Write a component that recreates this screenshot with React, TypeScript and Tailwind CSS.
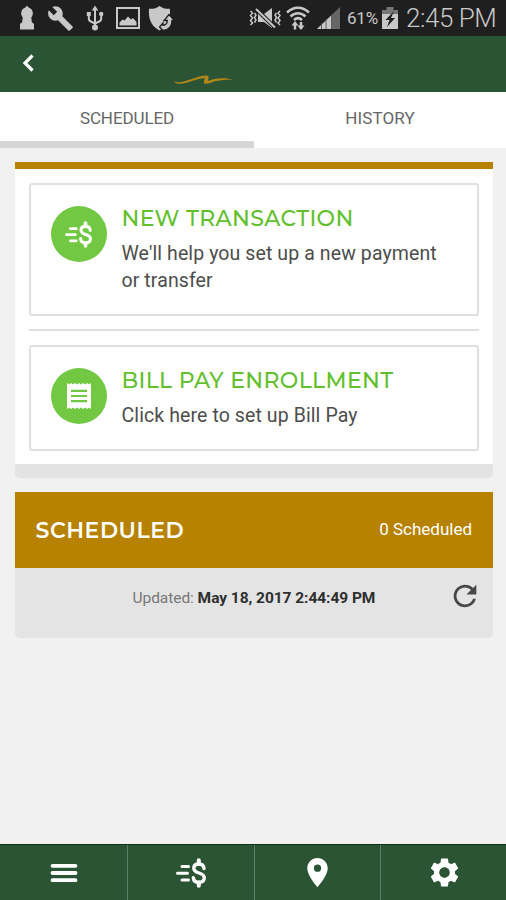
import type { ReactNode } from "react";
import { MdBuild, MdLocationOn, MdRefresh, MdSettings } from "react-icons/md";

function TransferIcon({ className }: { className?: string }) {
  return (
    <svg viewBox="0 0 32 30" className={className} fill="none" stroke="currentColor" strokeWidth="3.4" strokeLinecap="round">
      <path d="M7 8.500H13.500M2.500 15.200H12.500M7 22H13.500" strokeWidth="3" />
      <path d="M23.800 2.300v3.500M23.800 24.500V27.700" strokeWidth="4" />
      <path d="M29 10.500C28.800 7.200 26.800 6 23.800 6c-3 0-5 1.600-5 4.200 0 6 10.500 3.600 10.500 9.600 0 2.900-2.200 4.500-5.500 4.500s-5.300-1.600-5.500-4.700" />
    </svg>
  );
}

function ReceiptIcon() {
  return (
    <svg viewBox="0 0 26 28" className="h-7 w-[26px]">
      <path
        fill="#fff"
        d="M1 1l2 1.500L5 1l2 1.500L9 1l2 1.500L13 1l2 1.500L17 1l2 1.500L21 1l2 1.500L25 1v26l-2-1.500-2 1.500-2-1.500-2 1.500-2-1.500-2 1.500-2-1.500L9 27l-2-1.500L5 27l-2-1.500L1 27z"
      />
      <path d="M5 8.800h16M5 14h16M5 19.200h16" stroke="#72c842" strokeWidth="2.200" />
    </svg>
  );
}

function StatusBar() {
  return (
    <div className="flex h-9 items-center bg-[#1f1f1f] text-[#c8c8c8]">
      <svg viewBox="0 0 16 26" className="ml-[19px] h-[26px] w-4" fill="currentColor">
        <path d="M8 .8l1.700 1.600a6.200 6.200 0 0 1 2.600 9.900L12.800 17l2.200 2v5.500H1V19l2.200-2 .5-4.700A6.200 6.200 0 0 1 6.300 2.400z" />
      </svg>
      <MdBuild className="ml-3 size-[27px]" />
      <svg viewBox="0 0 18 26" className="ml-3 h-[26px] w-[18px]" fill="none" stroke="currentColor" strokeWidth="2">
        <path d="M9 4v18M2.800 9v4.500c0 2 1.500 3 3 3.500L9 18.500M15.200 9v4.500c0 2-1.500 3-3 3.500L9 18.500" />
        <path d="M9 .5l3.300 5H5.700zM.8 7h4v4h-4z" fill="currentColor" stroke="none" />
        <circle cx="15.200" cy="9" r="2.200" fill="currentColor" stroke="none" />
        <circle cx="9" cy="22.500" r="3" fill="currentColor" stroke="none" />
      </svg>
      <svg viewBox="0 0 24 22" className="ml-3 h-[22px] w-6">
        <path d="M1 1h22v20H1z" fill="none" stroke="currentColor" strokeWidth="2" />
        <path d="M3.500 18.500v-3l3-3 2 1 3.500-4 3 3 2-1.500 3.500 4v3.500z" fill="currentColor" />
      </svg>
      <svg viewBox="0 0 27 27" className="ml-2 size-[27px]">
        <path d="M11.500 1c3 2.400 6 3 10.300 2.800 1 9.200-.5 16.700-10.300 21.700C2.500 21 .3 13 1 3.800 5.500 4 8.500 3.400 11.500 1z" fill="currentColor" />
        <path
          d="M21 9.500l5.500 6H24c0 5.500-3 9.500-9 10l-3.500-3.500 3.500-4v2.300c3-.3 4.300-2 4.300-4.800h-3.300z"
          fill="currentColor"
          stroke="#1f1f1f"
          strokeWidth="1.300"
        />
      </svg>

      <svg viewBox="0 0 33 24" className="ml-auto h-6 w-[33px]" fill="none" stroke="currentColor" strokeWidth="1.500">
        <path d="M1.500 5l2 2-2 2.500 2 2.500-2 2.500 2 2.500-2 2M5.500 7L7 9l-1.500 2.500L7 14l-1.500 2.500M31 5l-2 2 2 2.500-2 2.500 2 2.500-2 2.500 2 2M27.500 7L26 9l1.500 2.500L26 14l1.500 2.500" />
        <path d="M9 8h6l8-6v20l-8-6H9z" fill="currentColor" stroke="none" />
        <path d="M7 3l19 18.500" stroke="#1f1f1f" strokeWidth="4" />
        <path d="M7 3l19 18.500" strokeWidth="2" />
      </svg>
      <svg viewBox="0 0 26 26" className="ml-[3px] size-[26px]" fill="none" stroke="currentColor" strokeWidth="2.500">
        <path d="M2 7.500c6.500-6.500 15.500-6.500 22 0M5.500 11.500c4.500-4.500 10.500-4.500 15 0M9 15c2.500-2.500 5.500-2.500 8 0" />
        <path d="M10 24.500V18M16 17v7" strokeWidth="2.500" />
        <path d="M6.500 20.500L10 16l3.500 4.500zM12.500 20.500L16 25l3.500-4.500z" fill="currentColor" stroke="none" />
      </svg>
      <svg viewBox="0 0 24 24" className="ml-[5px] size-6">
        <path d="M24 1v22H1z" fill="#666" />
        <path d="M16 8.700V23H1z" fill="currentColor" />
        <path d="M5.500 17v6M10 13v10M15.500 8v15" stroke="#444" strokeWidth=".8" />
      </svg>
      <span className="ml-[7px] w-8 font-[Roboto] text-[17px] leading-none tracking-[-0.200px]">61%</span>
      <svg viewBox="0 0 18 24" className="ml-[2px] h-6 w-[18px]">
        <path d="M5.500 1h7v3H17v19H1V4h4.500z" fill="#777" />
        <path d="M1 8h16v15H1z" fill="currentColor" />
        <path d="M13 5L4.500 14h4L6 21l8-9h-4z" fill="#1f1f1f" />
      </svg>
      <span className="mr-[9px] ml-[7px] w-[91px] font-[Roboto] text-[26px] leading-none font-light whitespace-nowrap tracking-[-0.450px]">
        2:45 PM
      </span>
    </div>
  );
}

function ActionCard({ icon, title, text, className }: { icon: ReactNode; title: string; text: string; className: string }) {
  return (
    <button className={`flex w-full items-start rounded-[3px] border-2 border-[#e0e0e0] pl-5 text-left ${className}`}>
      <span className="mt-[21px] flex size-14 shrink-0 items-center justify-center rounded-full bg-[#72c842] text-white">{icon}</span>
      <span className="mt-5 ml-[15px]">
        <span className="block font-[Montserrat,Lato] text-[22px] leading-[28px] font-medium tracking-[0.350px] whitespace-nowrap text-[#62c02d]">
          {title}
        </span>
        <span className="mt-2 block w-[330px] text-[19.500px] leading-[26.500px] tracking-[0.100px] text-[#4d4d4d]">{text}</span>
      </span>
    </button>
  );
}

export default function App() {
  return (
    <div className="flex h-[900px] w-[506px] flex-col overflow-hidden bg-[#f1f1f1] font-[Roboto,sans-serif]">
      <StatusBar />

      <header className="flex h-14 bg-[#2a5434]">
        <svg viewBox="0 0 12 18" className="mt-[18px] ml-[22px] h-[18px] w-3" fill="none" stroke="#fff" strokeWidth="3.200">
          <path d="M10.500 1.500L3 9l7.500 7.500" />
        </svg>
        <svg viewBox="0 0 62 12" className="mt-[38px] ml-[139px] h-3 w-[62px]" fill="#b28716">
          <path d="M1 7.500c4 1.500 8 .6 14-1.300S27 2 32.500 1.600c3-.1 3.700 1.200 3 2.800l-.7 2.500C41 4.500 47 4 53 4.300l7 1.500c-7-.3-13 .2-18 1.500-4 1.200-7 2.700-9.500 2.400-1.700-.2-1.900-1.300-1.500-2.700l.8-2.700C27 4.200 21 6.500 16 8 9 10.200 3 10.700 1 7.500z" />
        </svg>
      </header>

      <nav className="flex h-14 bg-white text-[17px] text-[#666]">
        <button className="w-[254px] border-b-[7px] border-[#d6d6d6] pt-[4px] tracking-[-0.100px]">SCHEDULED</button>
        <button className="flex-1 border-b-[7px] border-white pt-[4px] tracking-[0.100px]">HISTORY</button>
      </nav>

      <main className="flex-1 pt-[14px] pr-[13px] pl-[14.500px]">
        <section className="overflow-hidden rounded-b-[5px] border-t-[7px] border-b-[14px] border-t-[#b68200] border-b-[#e3e3e3] bg-white px-[14px] pt-[14px] pb-[13px]">
          <ActionCard
            className="h-[133px]"
            icon={<TransferIcon className="h-[27px] w-[29px]" />}
            title="NEW TRANSACTION"
            text="We'll help you set up a new payment or transfer"
          />
          <hr className="my-[13px] border-t-2 border-[#e0e0e0]" />
          <ActionCard className="mt-[14px] h-[106px]" icon={<ReceiptIcon />} title="BILL PAY ENROLLMENT" text="Click here to set up Bill Pay" />
        </section>

        <section className="mt-[14px] overflow-hidden rounded-b-[5px] bg-[#e4e4e4]">
          <div className="flex h-[76px] items-center justify-between bg-[#b68200] pr-[21px] pl-[21px] text-white">
            <h2 className="font-[Montserrat,Lato] text-[22px] font-semibold tracking-[0.550px]">SCHEDULED</h2>
            <span className="text-[17px]">0 Scheduled</span>
          </div>
          <div className="flex h-[70px] items-start">
            <p className="mt-[18px] ml-[118px] text-[15.500px] leading-6 tracking-[-0.050px] whitespace-nowrap text-[#777]">
              Updated: <b className="font-bold text-[#2e2e2e]">May 18, 2017 2:44:49 PM</b>
            </p>
            <MdRefresh className="mt-[11px] mr-[11px] ml-auto size-[34px] text-[#484848]" />
          </div>
        </section>
      </main>

      <footer className="grid h-14 grid-cols-[128px_127px_126px_1fr] divide-x divide-[#5d7d65] border-t border-[#12301a] bg-[#2a5434] text-white">
        <button className="flex items-center justify-center">
          <svg viewBox="0 0 28 20" className="h-5 w-7" stroke="currentColor" strokeWidth="3.800" strokeLinecap="round">
            <path d="M2.500 2.800h23M2.500 10h23M2.500 17.200h23" />
          </svg>
        </button>
        <button className="flex items-center justify-center">
          <TransferIcon className="h-[30px] w-8" />
        </button>
        <button className="flex items-center justify-center">
          <MdLocationOn className="size-[35px]" />
        </button>
        <button className="flex items-center justify-center pl-[2px]">
          <MdSettings className="size-[35px]" />
        </button>
      </footer>
    </div>
  );
}
